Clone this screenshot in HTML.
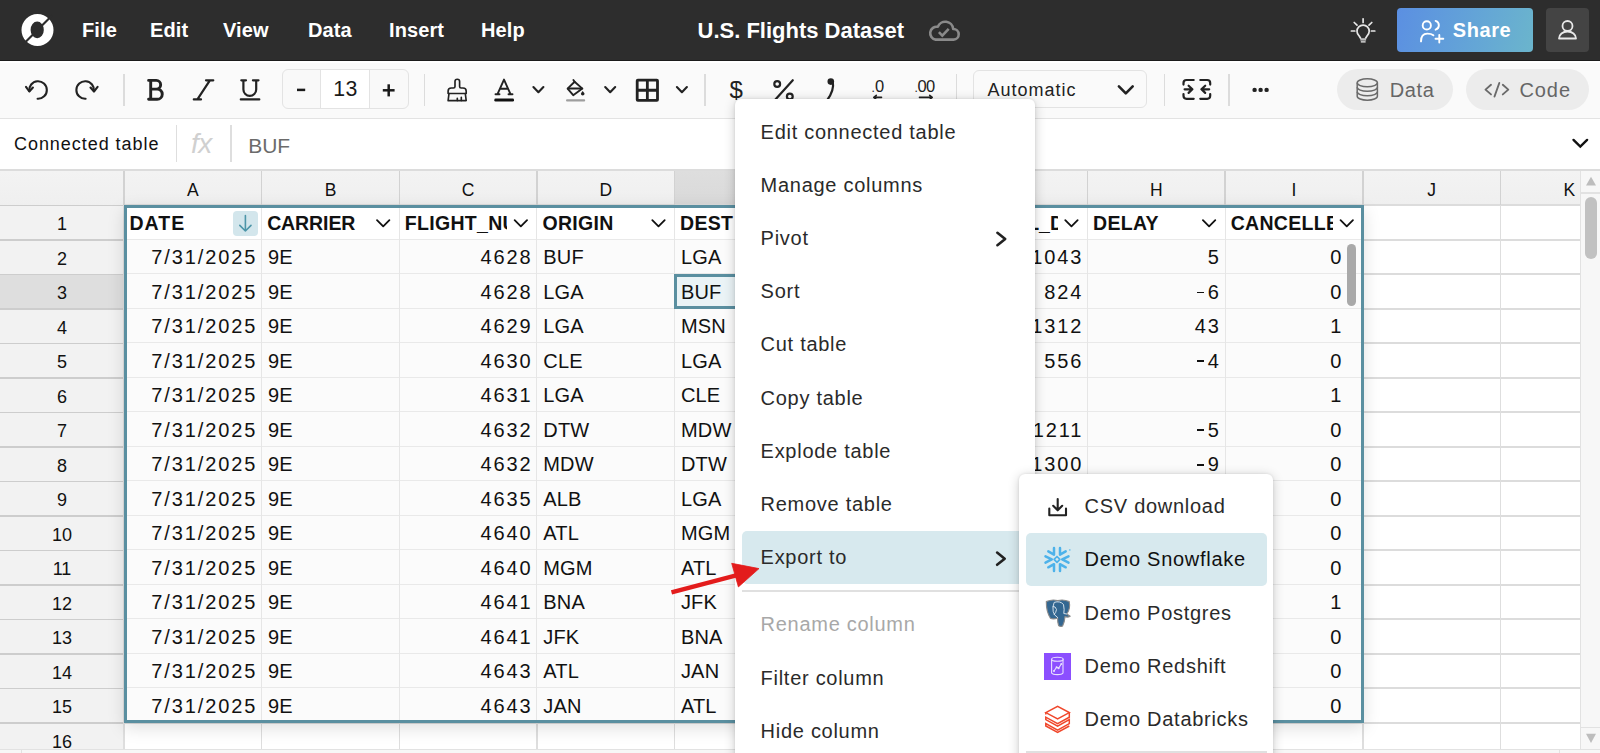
<!DOCTYPE html>
<html><head><meta charset="utf-8"><style>
html,body{margin:0;padding:0;width:1600px;height:753px;overflow:hidden;background:#fff;font-family:"Liberation Sans", sans-serif;}
.t{position:absolute;white-space:nowrap;}
.r{position:absolute;box-sizing:border-box;}
svg{position:absolute;overflow:visible;}
</style></head><body>
<div class="r" style="left:0px;top:0px;width:1600px;height:61px;background:#2d2d2d;"></div>
<div class="r" style="left:0px;top:60px;width:1600px;height:1px;background:#1b1b1b;"></div>
<svg style="left:0;top:0" width="80" height="61" viewBox="0 0 80 61">
<path fill="#fff" fill-rule="evenodd" d="M37.5 14 A16 16 0 1 1 37.5 46 A16 16 0 1 1 37.5 14 Z M37.2 21.6 A6.6 8.3 0 1 0 37.2 38.2 A6.6 8.3 0 1 0 37.2 21.6 Z"/>
<line x1="23" y1="44.5" x2="52" y2="15.5" stroke="#2d2d2d" stroke-width="2.2"/>
</svg>
<div class="t" style="left:82px;top:20.37px;font-size:20px;line-height:20px;font-weight:700;color:#fff;letter-spacing:0.1px;">File</div>
<div class="t" style="left:150px;top:20.37px;font-size:20px;line-height:20px;font-weight:700;color:#fff;letter-spacing:0.1px;">Edit</div>
<div class="t" style="left:223px;top:20.37px;font-size:20px;line-height:20px;font-weight:700;color:#fff;letter-spacing:0.1px;">View</div>
<div class="t" style="left:308px;top:20.37px;font-size:20px;line-height:20px;font-weight:700;color:#fff;letter-spacing:0.1px;">Data</div>
<div class="t" style="left:389px;top:20.37px;font-size:20px;line-height:20px;font-weight:700;color:#fff;letter-spacing:0.1px;">Insert</div>
<div class="t" style="left:481px;top:20.37px;font-size:20px;line-height:20px;font-weight:700;color:#fff;letter-spacing:0.1px;">Help</div>
<div class="t" style="left:697.5px;top:19.58px;font-size:22px;line-height:22px;font-weight:700;color:#fff;letter-spacing:0px;">U.S. Flights Dataset</div>
<svg style="left:0;top:0" width="1600" height="61">
<path d="M935.6 39.6 H953.6 A5.3 5.3 0 0 0 953.2 29 A8 8 0 0 0 937.8 26.8 A6.45 6.45 0 0 0 935.6 39.6 Z" fill="none" stroke="#8a8a8a" stroke-width="2.6" stroke-linejoin="round"/>
<path d="M938.9 32.2 L942.3 35.6 L948.7 28.9" fill="none" stroke="#8a8a8a" stroke-width="2.6" stroke-linecap="butt" stroke-linejoin="miter"/>
</svg>
<svg style="left:0;top:0" width="1600" height="61">
<g fill="none" stroke="#e6e6e6" stroke-width="1.7" stroke-linecap="round">
<path d="M1360.6 38.2 L1358.9 35.6 A6.1 6.1 0 1 1 1367.3 35.6 L1365.6 38.2"/>
<line x1="1363.1" y1="18.8" x2="1363.1" y2="22.4"/>
<line x1="1351.4" y1="31" x2="1354.8" y2="31"/>
<line x1="1371.4" y1="31" x2="1374.8" y2="31"/>
<line x1="1354.2" y1="22.5" x2="1357" y2="25.2"/>
<line x1="1371.8" y1="22.5" x2="1369" y2="25.2"/>
</g>
<rect x="1360.3" y="38.2" width="5.8" height="2.4" fill="#bdbdbd"/>
<rect x="1360.8" y="40.9" width="4.8" height="1.8" fill="#bdbdbd"/>
</svg>
<div class="r" style="left:1397px;top:8px;width:136px;height:44px;border-radius:4px;background:linear-gradient(105deg,#5b8fe2 0%,#64a6d6 60%,#6bb5cc 100%);"></div>
<svg style="left:0;top:0" width="1600" height="61">
<g fill="none" stroke="#fff" stroke-width="1.9" stroke-linecap="round">
<circle cx="1426.8" cy="25.4" r="4.1"/>
<path d="M1435.6 20.9 A4.6 4.6 0 0 1 1435.6 29.7"/>
<path d="M1421 41.4 Q1421 33.6 1427.3 33.6 Q1431.3 33.6 1433.4 35.3"/>
<line x1="1439.3" y1="35" x2="1439.3" y2="42.6"/>
<line x1="1435.5" y1="38.8" x2="1443.3" y2="38.8"/>
</g></svg>
<div class="t" style="left:1452.8px;top:20.37px;font-size:20px;line-height:20px;font-weight:700;color:#fff;letter-spacing:0.55px;">Share</div>
<div class="r" style="left:1546px;top:8px;width:43px;height:44px;border-radius:4px;background:#444;"></div>
<svg style="left:0;top:0" width="1600" height="61">
<g fill="none" stroke="#e8e8e8" stroke-width="1.8">
<circle cx="1567.5" cy="26" r="5"/>
<path d="M1559 38.5 A8.5 7 0 0 1 1576 38.5 Z" stroke-linejoin="round"/>
</g></svg>
<div class="r" style="left:0px;top:61px;width:1600px;height:57px;background:#fafafa;"></div>
<div class="r" style="left:0px;top:61px;width:1600px;height:1.5px;background:#ffffff;"></div>
<div class="r" style="left:0px;top:118px;width:1600px;height:1px;background:#e3e3e3;"></div>
<div class="r" style="left:123.25px;top:74px;width:1.5px;height:31.5px;background:#dcdcdc;"></div>
<div class="r" style="left:423.95px;top:74px;width:1.5px;height:31.5px;background:#dcdcdc;"></div>
<div class="r" style="left:704.25px;top:74px;width:1.5px;height:31.5px;background:#dcdcdc;"></div>
<div class="r" style="left:955.85px;top:74px;width:1.5px;height:31.5px;background:#dcdcdc;"></div>
<div class="r" style="left:1163.65px;top:74px;width:1.5px;height:31.5px;background:#dcdcdc;"></div>
<div class="r" style="left:1228.05px;top:74px;width:1.5px;height:31.5px;background:#dcdcdc;"></div>
<svg style="left:0;top:0" width="1600" height="120">
<g fill="none" stroke="#222" stroke-width="2.1" stroke-linecap="round" stroke-linejoin="round">
<path d="M37.6 98.8 A8.8 8.8 0 1 0 29.3 91.2"/>
<path d="M26 86.9 L29.3 91.5 L32.9 87.5"/>
<path d="M85.6 98.8 A8.8 8.8 0 1 1 93.9 91.2"/>
<path d="M90.5 87.5 L94 91.5 L97.6 86.9"/>
</g>
<g fill="none" stroke="#222" stroke-width="2.9" stroke-linecap="round" stroke-linejoin="round">
<path d="M148.6 80.4 H156.3 A4.35 4.35 0 0 1 156.3 89.1 H150.7 M150.7 80.4 V99.2 M148.6 99.2 H157.2 A5.05 5.05 0 0 0 157.2 89.1"/>
</g>
<g fill="none" stroke="#222" stroke-width="2.2" stroke-linecap="round">
<path d="M206 80.3 H213.3 M209.9 80.3 L197.4 99.4 M193.8 99.4 H201"/>
<path d="M241.3 80.3 H246 M252.9 80.3 H258.5 M243.4 80.3 V89.4 A6.4 6.4 0 0 0 256.2 89.4 V80.3 M240.8 99.4 H259.3"/>
</g>
</svg>
<div class="r" style="left:282.3px;top:69.3px;width:126.4px;height:40px;border:1px solid #e3e3e3;border-radius:6px;background:#f9f9f9;"></div>
<div class="r" style="left:320px;top:70.3px;width:50.4px;height:38px;background:#fff;border-left:1.2px solid #e3e3e3;border-right:1.2px solid #e3e3e3;"></div>
<svg style="left:0;top:0" width="1600" height="120">
<g stroke="#1a1a1a" stroke-width="2.5" stroke-linecap="butt">
<line x1="297" y1="89.9" x2="305.2" y2="89.9"/>
<line x1="382.8" y1="90.3" x2="394.6" y2="90.3"/>
<line x1="388.7" y1="84.3" x2="388.7" y2="96.4"/>
</g></svg>
<div class="t" style="left:45.60000000000002px;width:600px;text-align:center;top:78.87px;font-size:21.3px;line-height:21.3px;font-weight:400;color:#1a1a1a;letter-spacing:0.6px;">13</div>
<svg style="left:0;top:0" width="1600" height="120">
<g fill="none" stroke="#222" stroke-width="1.65" stroke-linejoin="round" stroke-linecap="round">
<path d="M448.1 93.5 V91.2 A3.2 3.2 0 0 1 451.3 88 H453.5 A1.5 1.5 0 0 0 455 86.5 V81.5 A2.3 2.3 0 0 1 459.6 81.5 V86.5 A1.5 1.5 0 0 0 461.1 88 H463 A3.2 3.2 0 0 1 466.2 91.2 V93.5 Z"/>
<path d="M449 93.5 L448.1 100.6 H466.2 L465.3 93.5"/>
<path d="M457.3 100.6 V98.2 M461.3 100.6 V97.2"/>
</g>
<g fill="none" stroke="#222" stroke-width="1.9" stroke-linecap="round" stroke-linejoin="round">
<path d="M497.5 94.2 L504 79.6 L510.5 94.2 M500 88.8 H508 M495.5 94.2 H499.5 M508.5 94.2 H512.5"/>
</g>
<rect x="494.3" y="98.6" width="19.7" height="3" rx="1.3" fill="#111"/>
<g fill="none" stroke="#222" stroke-width="2.1" stroke-linecap="round" stroke-linejoin="round">
<path d="M533.4 87 L538.4 92.2 L543.4 87"/>
<path d="M605.2 87 L610.2 92.2 L615.2 87"/>
<path d="M676.9 87 L681.9 92.2 L686.9 87"/>
</g>
<g fill="none" stroke="#222" stroke-width="1.9" stroke-linejoin="round" stroke-linecap="round">
<path d="M567.6 88.6 L574.6 81.8 L582.4 88.6 L573.2 95.2 Z"/>
<path d="M568 88.5 H582"/>
<path d="M574.6 81.8 L573.4 80"/>
</g>
<path d="M582.7 90.9 Q584.5 92.9 584.5 93.7 A1.8 1.8 0 0 1 580.9 93.7 Q580.9 92.9 582.7 90.9 Z" fill="#222"/>
<rect x="566" y="99.3" width="19.2" height="2.3" rx="1.1" fill="#9e9e9e"/>
<g fill="none" stroke="#222" stroke-width="2.8" stroke-linejoin="round">
<rect x="637.2" y="80.2" width="20.3" height="20.1" rx="0.6"/>
<path d="M647.35 80.2 V100.3 M637.2 90.25 H657.5"/>
</g>
</svg>
<div class="t" style="left:436.29999999999995px;width:600px;text-align:center;top:78.18px;font-size:24px;line-height:24px;font-weight:400;color:#222;letter-spacing:0px;">$</div>
<svg style="left:0;top:0" width="1600" height="120">
<g fill="none" stroke="#222" stroke-width="2.2" stroke-linecap="round">
<circle cx="777.2" cy="84" r="2.9"/>
<circle cx="789.8" cy="96.5" r="2.9"/>
<line x1="792.8" y1="80.2" x2="774.5" y2="100.5"/>
</g>
<circle cx="830.8" cy="81.6" r="3.3" fill="#222"/>
<path d="M832.8 82 Q834.5 90 827 100.5" fill="none" stroke="#222" stroke-width="2.2" stroke-linecap="round"/>
<g fill="none" stroke="#222" stroke-width="1.6" stroke-linecap="round" stroke-linejoin="round">
<path d="M873.8 97.4 H881.5 M873.8 97.4 L876.3 95.3 M873.8 97.4 L876.3 99.5"/>
<path d="M919.5 97.4 H932.2 M932.2 97.4 L929.7 95.3 M932.2 97.4 L929.7 99.5"/>
</g>
</svg>
<div class="t" style="left:577.6px;width:600px;text-align:center;top:78.23px;font-size:16.5px;line-height:16.5px;font-weight:400;color:#222;letter-spacing:0px;letter-spacing:-0.5px;"><span style="font-size:12px;margin-right:0.5px">.</span>0</div>
<div class="t" style="left:624.4px;width:600px;text-align:center;top:78.23px;font-size:16.5px;line-height:16.5px;font-weight:400;color:#222;letter-spacing:0px;letter-spacing:-0.8px;"><span style="font-size:12px;margin-right:0.5px">.</span>00</div>
<div class="r" style="left:973.4px;top:70.3px;width:174.1px;height:37.8px;border:1px solid #e3e3e3;border-radius:6px;background:#fafafa;"></div>
<div class="t" style="left:987.5px;top:81.06px;font-size:18px;line-height:18px;font-weight:400;color:#222;letter-spacing:1.0px;">Automatic</div>
<svg style="left:0;top:0" width="1600" height="120">
<path d="M1118.9 86.4 L1125.8 93.4 L1132.7 86.4" fill="none" stroke="#222" stroke-width="2.6" stroke-linecap="round" stroke-linejoin="round"/>
<g fill="none" stroke="#222" stroke-width="2.2" stroke-linecap="round" stroke-linejoin="round">
<path d="M1183.5 84.6 V83 A3 3 0 0 1 1186.5 80 H1193.7 M1200.3 80 H1207.2 A3 3 0 0 1 1210.2 83 V84.6 M1210.2 94 V95.8 A3 3 0 0 1 1207.2 98.8 H1200.3 M1193.7 98.8 H1186.5 A3 3 0 0 1 1183.5 95.8 V94"/>
<path d="M1184.6 89.3 H1192.4 M1188.6 85.7 L1192.4 89.3 L1188.6 92.9"/>
<path d="M1209.2 89.3 H1201.4 M1205.2 85.7 L1201.4 89.3 L1205.2 92.9"/>
</g>
<circle cx="1254.6" cy="89.9" r="2.2" fill="#222"/>
<circle cx="1260.6" cy="89.9" r="2.2" fill="#222"/>
<circle cx="1266.6" cy="89.9" r="2.2" fill="#222"/>
</svg>
<div class="r" style="left:1337px;top:69px;width:116px;height:41px;border-radius:21px;background:#ececec;"></div>
<div class="r" style="left:1466px;top:69px;width:123px;height:41px;border-radius:21px;background:#ececec;"></div>
<svg style="left:0;top:0" width="1600" height="120">
<g fill="none" stroke="#6a6a6a" stroke-width="1.5">
<ellipse cx="1367.3" cy="82.8" rx="10.1" ry="4"/>
<path d="M1357.2 82.8 V96.2 A10.1 4 0 0 0 1377.4 96.2 V82.8"/>
<path d="M1357.2 87.3 A10.1 4 0 0 0 1377.4 87.3"/>
<path d="M1357.2 91.8 A10.1 4 0 0 0 1377.4 91.8"/>
</g>
<g fill="none" stroke="#6a6a6a" stroke-width="1.9" stroke-linecap="round" stroke-linejoin="round">
<path d="M1491 84.8 L1485.5 89.6 L1491 94.4"/>
<path d="M1502.8 84.8 L1508.3 89.6 L1502.8 94.4"/>
<path d="M1499.3 83 L1494.5 96.5"/>
</g>
</svg>
<div class="t" style="left:1389.8px;top:79.57px;font-size:20px;line-height:20px;font-weight:400;color:#666;letter-spacing:0.6px;">Data</div>
<div class="t" style="left:1519.5px;top:79.57px;font-size:20px;line-height:20px;font-weight:400;color:#666;letter-spacing:0.9px;">Code</div>
<div class="r" style="left:0px;top:119px;width:1600px;height:51px;background:#fff;"></div>
<div class="r" style="left:0px;top:169px;width:1600px;height:2px;background:#dcdcdc;"></div>
<div class="t" style="left:14px;top:135.36px;font-size:18px;line-height:18px;font-weight:400;color:#111;letter-spacing:0.95px;">Connected table</div>
<div class="r" style="left:175.5px;top:125.3px;width:1.5px;height:36.7px;background:#dedede;"></div>
<div class="r" style="left:230.3px;top:125.3px;width:1.5px;height:36.7px;background:#dedede;"></div>
<div class="t" style="left:191px;top:130.30px;font-size:28px;line-height:28px;font-weight:400;color:#d0d0d0;letter-spacing:-0.5px;font-style:italic;">fx</div>
<div class="t" style="left:248.3px;top:135.22px;font-size:21px;line-height:21px;font-weight:400;color:#6b6b6b;letter-spacing:-0.1px;">BUF</div>
<svg style="left:0;top:0" width="1600" height="175">
<path d="M1573.5 139.9 L1580.3 146.5 L1587.1 139.9" fill="none" stroke="#111" stroke-width="2.4" stroke-linecap="round" stroke-linejoin="miter"/>
</svg>
<div class="r" style="left:0px;top:171px;width:1600px;height:34.5px;background:linear-gradient(#f3f3f3,#efefef);"></div>
<div class="r" style="left:674.6px;top:171px;width:137.65px;height:34.5px;background:linear-gradient(#dedede,#d9d9d9);"></div>
<div class="r" style="left:0px;top:205px;width:124px;height:548px;background:#f2f2f2;"></div>
<div class="r" style="left:0px;top:274.9px;width:124px;height:34.5px;background:#dedede;"></div>
<div class="r" style="left:124px;top:205px;width:1456.5px;height:548px;background:#fff;"></div>
<div class="r" style="left:124px;top:204.4px;width:1456px;height:2px;background:#dcdcdc;"></div>
<div class="r" style="left:0px;top:204.6px;width:124px;height:1.6px;background:#cdcdcd;"></div>
<div class="r" style="left:124px;top:238.9px;width:1456px;height:2px;background:#dcdcdc;"></div>
<div class="r" style="left:0px;top:239.1px;width:124px;height:1.6px;background:#cdcdcd;"></div>
<div class="r" style="left:124px;top:273.4px;width:1456px;height:2px;background:#dcdcdc;"></div>
<div class="r" style="left:0px;top:273.59999999999997px;width:124px;height:1.6px;background:#cdcdcd;"></div>
<div class="r" style="left:124px;top:307.9px;width:1456px;height:2px;background:#dcdcdc;"></div>
<div class="r" style="left:0px;top:308.09999999999997px;width:124px;height:1.6px;background:#cdcdcd;"></div>
<div class="r" style="left:124px;top:342.4px;width:1456px;height:2px;background:#dcdcdc;"></div>
<div class="r" style="left:0px;top:342.59999999999997px;width:124px;height:1.6px;background:#cdcdcd;"></div>
<div class="r" style="left:124px;top:376.9px;width:1456px;height:2px;background:#dcdcdc;"></div>
<div class="r" style="left:0px;top:377.09999999999997px;width:124px;height:1.6px;background:#cdcdcd;"></div>
<div class="r" style="left:124px;top:411.4px;width:1456px;height:2px;background:#dcdcdc;"></div>
<div class="r" style="left:0px;top:411.59999999999997px;width:124px;height:1.6px;background:#cdcdcd;"></div>
<div class="r" style="left:124px;top:445.9px;width:1456px;height:2px;background:#dcdcdc;"></div>
<div class="r" style="left:0px;top:446.09999999999997px;width:124px;height:1.6px;background:#cdcdcd;"></div>
<div class="r" style="left:124px;top:480.4px;width:1456px;height:2px;background:#dcdcdc;"></div>
<div class="r" style="left:0px;top:480.59999999999997px;width:124px;height:1.6px;background:#cdcdcd;"></div>
<div class="r" style="left:124px;top:514.9px;width:1456px;height:2px;background:#dcdcdc;"></div>
<div class="r" style="left:0px;top:515.1px;width:124px;height:1.6px;background:#cdcdcd;"></div>
<div class="r" style="left:124px;top:549.4px;width:1456px;height:2px;background:#dcdcdc;"></div>
<div class="r" style="left:0px;top:549.6px;width:124px;height:1.6px;background:#cdcdcd;"></div>
<div class="r" style="left:124px;top:583.9px;width:1456px;height:2px;background:#dcdcdc;"></div>
<div class="r" style="left:0px;top:584.1px;width:124px;height:1.6px;background:#cdcdcd;"></div>
<div class="r" style="left:124px;top:618.4px;width:1456px;height:2px;background:#dcdcdc;"></div>
<div class="r" style="left:0px;top:618.6px;width:124px;height:1.6px;background:#cdcdcd;"></div>
<div class="r" style="left:124px;top:652.9px;width:1456px;height:2px;background:#dcdcdc;"></div>
<div class="r" style="left:0px;top:653.1px;width:124px;height:1.6px;background:#cdcdcd;"></div>
<div class="r" style="left:124px;top:687.4px;width:1456px;height:2px;background:#dcdcdc;"></div>
<div class="r" style="left:0px;top:687.6px;width:124px;height:1.6px;background:#cdcdcd;"></div>
<div class="r" style="left:124px;top:721.9px;width:1456px;height:2px;background:#dcdcdc;"></div>
<div class="r" style="left:0px;top:722.1px;width:124px;height:1.6px;background:#cdcdcd;"></div>
<div class="r" style="left:124px;top:756.4px;width:1456px;height:2px;background:#dcdcdc;"></div>
<div class="r" style="left:0px;top:756.6px;width:124px;height:1.6px;background:#cdcdcd;"></div>
<div class="r" style="left:123.25px;top:171px;width:1.5px;height:34px;background:#d2d2d2;"></div>
<div class="r" style="left:123.25px;top:205px;width:1.5px;height:548px;background:#dedede;"></div>
<div class="r" style="left:260.9px;top:171px;width:1.5px;height:34px;background:#d2d2d2;"></div>
<div class="r" style="left:260.9px;top:205px;width:1.5px;height:548px;background:#dedede;"></div>
<div class="r" style="left:398.55px;top:171px;width:1.5px;height:34px;background:#d2d2d2;"></div>
<div class="r" style="left:398.55px;top:205px;width:1.5px;height:548px;background:#dedede;"></div>
<div class="r" style="left:536.2px;top:171px;width:1.5px;height:34px;background:#d2d2d2;"></div>
<div class="r" style="left:536.2px;top:205px;width:1.5px;height:548px;background:#dedede;"></div>
<div class="r" style="left:673.85px;top:171px;width:1.5px;height:34px;background:#d2d2d2;"></div>
<div class="r" style="left:673.85px;top:205px;width:1.5px;height:548px;background:#dedede;"></div>
<div class="r" style="left:811.5px;top:171px;width:1.5px;height:34px;background:#d2d2d2;"></div>
<div class="r" style="left:811.5px;top:205px;width:1.5px;height:548px;background:#dedede;"></div>
<div class="r" style="left:949.1500000000001px;top:171px;width:1.5px;height:34px;background:#d2d2d2;"></div>
<div class="r" style="left:949.1500000000001px;top:205px;width:1.5px;height:548px;background:#dedede;"></div>
<div class="r" style="left:1086.8000000000002px;top:171px;width:1.5px;height:34px;background:#d2d2d2;"></div>
<div class="r" style="left:1086.8000000000002px;top:205px;width:1.5px;height:548px;background:#dedede;"></div>
<div class="r" style="left:1224.45px;top:171px;width:1.5px;height:34px;background:#d2d2d2;"></div>
<div class="r" style="left:1224.45px;top:205px;width:1.5px;height:548px;background:#dedede;"></div>
<div class="r" style="left:1362.1000000000001px;top:171px;width:1.5px;height:34px;background:#d2d2d2;"></div>
<div class="r" style="left:1362.1000000000001px;top:205px;width:1.5px;height:548px;background:#dedede;"></div>
<div class="r" style="left:1499.75px;top:171px;width:1.5px;height:34px;background:#d2d2d2;"></div>
<div class="r" style="left:1499.75px;top:205px;width:1.5px;height:548px;background:#dedede;"></div>
<div class="r" style="left:1637.4px;top:171px;width:1.5px;height:34px;background:#d2d2d2;"></div>
<div class="r" style="left:1637.4px;top:205px;width:1.5px;height:548px;background:#dedede;"></div>
<div class="t" style="left:-107.17500000000001px;width:600px;text-align:center;top:181.69px;font-size:17.5px;line-height:17.5px;font-weight:400;color:#111;letter-spacing:0px;">A</div>
<div class="t" style="left:30.474999999999966px;width:600px;text-align:center;top:181.69px;font-size:17.5px;line-height:17.5px;font-weight:400;color:#111;letter-spacing:0px;">B</div>
<div class="t" style="left:168.125px;width:600px;text-align:center;top:181.69px;font-size:17.5px;line-height:17.5px;font-weight:400;color:#111;letter-spacing:0px;">C</div>
<div class="t" style="left:305.7750000000001px;width:600px;text-align:center;top:181.69px;font-size:17.5px;line-height:17.5px;font-weight:400;color:#111;letter-spacing:0px;">D</div>
<div class="t" style="left:443.42500000000007px;width:600px;text-align:center;top:181.69px;font-size:17.5px;line-height:17.5px;font-weight:400;color:#111;letter-spacing:0px;">E</div>
<div class="t" style="left:581.075px;width:600px;text-align:center;top:181.69px;font-size:17.5px;line-height:17.5px;font-weight:400;color:#111;letter-spacing:0px;">F</div>
<div class="t" style="left:718.7250000000001px;width:600px;text-align:center;top:181.69px;font-size:17.5px;line-height:17.5px;font-weight:400;color:#111;letter-spacing:0px;">G</div>
<div class="t" style="left:856.3750000000002px;width:600px;text-align:center;top:181.69px;font-size:17.5px;line-height:17.5px;font-weight:400;color:#111;letter-spacing:0px;">H</div>
<div class="t" style="left:994.0250000000001px;width:600px;text-align:center;top:181.69px;font-size:17.5px;line-height:17.5px;font-weight:400;color:#111;letter-spacing:0px;">I</div>
<div class="t" style="left:1131.6750000000002px;width:600px;text-align:center;top:181.69px;font-size:17.5px;line-height:17.5px;font-weight:400;color:#111;letter-spacing:0px;">J</div>
<div class="t" style="left:1269.325px;width:600px;text-align:center;top:181.69px;font-size:17.5px;line-height:17.5px;font-weight:400;color:#111;letter-spacing:0px;">K</div>
<div class="t" style="left:-238px;width:600px;text-align:center;top:215.16px;font-size:18px;line-height:18px;font-weight:400;color:#111;letter-spacing:0px;">1</div>
<div class="t" style="left:-238px;width:600px;text-align:center;top:249.66px;font-size:18px;line-height:18px;font-weight:400;color:#111;letter-spacing:0px;">2</div>
<div class="t" style="left:-238px;width:600px;text-align:center;top:284.16px;font-size:18px;line-height:18px;font-weight:400;color:#111;letter-spacing:0px;">3</div>
<div class="t" style="left:-238px;width:600px;text-align:center;top:318.66px;font-size:18px;line-height:18px;font-weight:400;color:#111;letter-spacing:0px;">4</div>
<div class="t" style="left:-238px;width:600px;text-align:center;top:353.16px;font-size:18px;line-height:18px;font-weight:400;color:#111;letter-spacing:0px;">5</div>
<div class="t" style="left:-238px;width:600px;text-align:center;top:387.66px;font-size:18px;line-height:18px;font-weight:400;color:#111;letter-spacing:0px;">6</div>
<div class="t" style="left:-238px;width:600px;text-align:center;top:422.16px;font-size:18px;line-height:18px;font-weight:400;color:#111;letter-spacing:0px;">7</div>
<div class="t" style="left:-238px;width:600px;text-align:center;top:456.66px;font-size:18px;line-height:18px;font-weight:400;color:#111;letter-spacing:0px;">8</div>
<div class="t" style="left:-238px;width:600px;text-align:center;top:491.16px;font-size:18px;line-height:18px;font-weight:400;color:#111;letter-spacing:0px;">9</div>
<div class="t" style="left:-238px;width:600px;text-align:center;top:525.66px;font-size:18px;line-height:18px;font-weight:400;color:#111;letter-spacing:0px;">10</div>
<div class="t" style="left:-238px;width:600px;text-align:center;top:560.16px;font-size:18px;line-height:18px;font-weight:400;color:#111;letter-spacing:0px;">11</div>
<div class="t" style="left:-238px;width:600px;text-align:center;top:594.66px;font-size:18px;line-height:18px;font-weight:400;color:#111;letter-spacing:0px;">12</div>
<div class="t" style="left:-238px;width:600px;text-align:center;top:629.16px;font-size:18px;line-height:18px;font-weight:400;color:#111;letter-spacing:0px;">13</div>
<div class="t" style="left:-238px;width:600px;text-align:center;top:663.66px;font-size:18px;line-height:18px;font-weight:400;color:#111;letter-spacing:0px;">14</div>
<div class="t" style="left:-238px;width:600px;text-align:center;top:698.16px;font-size:18px;line-height:18px;font-weight:400;color:#111;letter-spacing:0px;">15</div>
<div class="t" style="left:-238px;width:600px;text-align:center;top:732.66px;font-size:18px;line-height:18px;font-weight:400;color:#111;letter-spacing:0px;">16</div>
<div class="r" style="left:124px;top:205px;width:1240px;height:517.5px;background:#fbfbfb;box-shadow:0 5px 16px rgba(0,0,0,0.13);"></div>
<div class="r" style="left:124px;top:205px;width:1240px;height:34.400000000000006px;background:#fff;"></div>
<div class="r" style="left:124px;top:238.9px;width:1240px;height:1px;background:#e9e9e9;"></div>
<div class="r" style="left:124px;top:273.4px;width:1240px;height:1px;background:#e9e9e9;"></div>
<div class="r" style="left:124px;top:307.9px;width:1240px;height:1px;background:#e9e9e9;"></div>
<div class="r" style="left:124px;top:342.4px;width:1240px;height:1px;background:#e9e9e9;"></div>
<div class="r" style="left:124px;top:376.9px;width:1240px;height:1px;background:#e9e9e9;"></div>
<div class="r" style="left:124px;top:411.4px;width:1240px;height:1px;background:#e9e9e9;"></div>
<div class="r" style="left:124px;top:445.9px;width:1240px;height:1px;background:#e9e9e9;"></div>
<div class="r" style="left:124px;top:480.4px;width:1240px;height:1px;background:#e9e9e9;"></div>
<div class="r" style="left:124px;top:514.9px;width:1240px;height:1px;background:#e9e9e9;"></div>
<div class="r" style="left:124px;top:549.4px;width:1240px;height:1px;background:#e9e9e9;"></div>
<div class="r" style="left:124px;top:583.9px;width:1240px;height:1px;background:#e9e9e9;"></div>
<div class="r" style="left:124px;top:618.4px;width:1240px;height:1px;background:#e9e9e9;"></div>
<div class="r" style="left:124px;top:652.9px;width:1240px;height:1px;background:#e9e9e9;"></div>
<div class="r" style="left:124px;top:687.4px;width:1240px;height:1px;background:#e9e9e9;"></div>
<div class="r" style="left:261.15px;top:205px;width:1px;height:517.5px;background:#e6e6e6;"></div>
<div class="r" style="left:398.8px;top:205px;width:1px;height:517.5px;background:#e6e6e6;"></div>
<div class="r" style="left:536.45px;top:205px;width:1px;height:517.5px;background:#e6e6e6;"></div>
<div class="r" style="left:674.1px;top:205px;width:1px;height:517.5px;background:#e6e6e6;"></div>
<div class="r" style="left:811.75px;top:205px;width:1px;height:517.5px;background:#e6e6e6;"></div>
<div class="r" style="left:949.4000000000001px;top:205px;width:1px;height:517.5px;background:#e6e6e6;"></div>
<div class="r" style="left:1087.0500000000002px;top:205px;width:1px;height:517.5px;background:#e6e6e6;"></div>
<div class="r" style="left:1224.7px;top:205px;width:1px;height:517.5px;background:#e6e6e6;"></div>
<div class="t" style="left:129.5px;top:213.69px;width:127.65px;overflow:hidden;font-size:19.5px;line-height:19.5px;font-weight:700;color:#111;letter-spacing:1.0px;">DATE</div>
<div class="t" style="left:267.15px;top:213.69px;width:102.65px;overflow:hidden;font-size:19.5px;line-height:19.5px;font-weight:700;color:#111;letter-spacing:-0.1px;">CARRIER</div>
<div class="t" style="left:404.8px;top:213.69px;width:102.65px;overflow:hidden;font-size:19.5px;line-height:19.5px;font-weight:700;color:#111;letter-spacing:0.3px;">FLIGHT_NUMBER</div>
<div class="t" style="left:542.45px;top:213.69px;width:102.65px;overflow:hidden;font-size:19.5px;line-height:19.5px;font-weight:700;color:#111;letter-spacing:0.3px;">ORIGIN</div>
<div class="t" style="left:680.1px;top:213.69px;width:102.65px;overflow:hidden;font-size:19.5px;line-height:19.5px;font-weight:700;color:#111;letter-spacing:0.3px;">DEST</div>
<div class="t" style="left:817.75px;top:213.69px;width:102.65px;overflow:hidden;font-size:19.5px;line-height:19.5px;font-weight:700;color:#111;letter-spacing:0.3px;">SCHED_DEP</div>
<div class="t" style="left:955.4000000000001px;top:213.69px;width:102.65px;height:22px;overflow:hidden;font-size:19.5px;line-height:19.5px;font-weight:700;color:#111;"><span style="position:absolute;right:-6px;top:0;">AL_D</span></div>
<div class="t" style="left:1093.0500000000002px;top:213.69px;width:102.65px;overflow:hidden;font-size:19.5px;line-height:19.5px;font-weight:700;color:#111;letter-spacing:0.3px;">DELAY</div>
<div class="t" style="left:1230.7px;top:213.69px;width:102.65px;overflow:hidden;font-size:19.5px;line-height:19.5px;font-weight:700;color:#111;letter-spacing:0.3px;">CANCELLED</div>
<svg style="left:0;top:0" width="1600" height="260"><g fill="none" stroke="#111" stroke-width="1.8" stroke-linecap="round" stroke-linejoin="round"><path d="M377.00 220.2 L383.20 226.4 L389.40 220.2"/><path d="M514.65 220.2 L520.85 226.4 L527.05 220.2"/><path d="M652.30 220.2 L658.50 226.4 L664.70 220.2"/><path d="M789.95 220.2 L796.15 226.4 L802.35 220.2"/><path d="M927.60 220.2 L933.80 226.4 L940.00 220.2"/><path d="M1065.25 220.2 L1071.45 226.4 L1077.65 220.2"/><path d="M1202.90 220.2 L1209.10 226.4 L1215.30 220.2"/><path d="M1340.55 220.2 L1346.75 226.4 L1352.95 220.2"/></g></svg>
<div class="r" style="left:233px;top:210.9px;width:24.8px;height:24.7px;background:#d3e6ec;border-radius:4px;"></div>
<svg style="left:0;top:0" width="1600" height="260"><g fill="none" stroke="#4d95a8" stroke-width="1.6" stroke-linecap="round" stroke-linejoin="round">
<path d="M245.4 215.5 V231 M239.8 225.4 L245.4 231 L251 225.4"/></g></svg>
<div class="r" style="left:674.3000000000001px;top:273.6px;width:138.25px;height:35.6px;background:#eaf3f6;border:3.2px solid #5a8fa0;"></div>
<div class="t" style="right:1344.55px;top:247.47px;font-size:20px;line-height:20px;font-weight:400;color:#111;letter-spacing:1.9px;padding-right:0;margin-right:-1.9px;">7/31/2025</div>
<div class="t" style="left:267.95px;top:247.47px;font-size:20px;line-height:20px;font-weight:400;color:#111;letter-spacing:0.2px;">9E</div>
<div class="t" style="right:1069.25px;top:247.47px;font-size:20px;line-height:20px;font-weight:400;color:#111;letter-spacing:1.9px;padding-right:0;margin-right:-1.9px;">4628</div>
<div class="t" style="left:543.25px;top:247.47px;font-size:20px;line-height:20px;font-weight:400;color:#111;letter-spacing:0.2px;">BUF</div>
<div class="t" style="left:680.9px;top:247.47px;font-size:20px;line-height:20px;font-weight:400;color:#111;letter-spacing:0.2px;">LGA</div>
<div class="t" style="right:518.6499999999999px;top:247.47px;font-size:20px;line-height:20px;font-weight:400;color:#111;letter-spacing:1.9px;padding-right:0;margin-right:-1.9px;">1043</div>
<div class="t" style="right:381.0px;top:247.47px;font-size:20px;line-height:20px;font-weight:400;color:#111;letter-spacing:1.9px;padding-right:0;margin-right:-1.9px;">5</div>
<div class="t" style="right:258.64999999999986px;top:247.47px;font-size:20px;line-height:20px;font-weight:400;color:#111;letter-spacing:1.9px;padding-right:0;margin-right:-1.9px;">0</div>
<div class="t" style="right:1344.55px;top:281.94px;font-size:20px;line-height:20px;font-weight:400;color:#111;letter-spacing:1.9px;padding-right:0;margin-right:-1.9px;">7/31/2025</div>
<div class="t" style="left:267.95px;top:281.94px;font-size:20px;line-height:20px;font-weight:400;color:#111;letter-spacing:0.2px;">9E</div>
<div class="t" style="right:1069.25px;top:281.94px;font-size:20px;line-height:20px;font-weight:400;color:#111;letter-spacing:1.9px;padding-right:0;margin-right:-1.9px;">4628</div>
<div class="t" style="left:543.25px;top:281.94px;font-size:20px;line-height:20px;font-weight:400;color:#111;letter-spacing:0.2px;">LGA</div>
<div class="t" style="left:680.9px;top:281.94px;font-size:20px;line-height:20px;font-weight:400;color:#111;letter-spacing:0.2px;">BUF</div>
<div class="t" style="right:518.6499999999999px;top:281.94px;font-size:20px;line-height:20px;font-weight:400;color:#111;letter-spacing:1.9px;padding-right:0;margin-right:-1.9px;">824</div>
<div class="t" style="right:381.0px;top:281.94px;font-size:20px;line-height:20px;font-weight:400;color:#111;letter-spacing:1.9px;padding-right:0;margin-right:-1.9px;"><span style="display:inline-block;width:6.8px;height:1.8px;background:#111;vertical-align:5.6px;margin-right:4.3px"></span>6</div>
<div class="t" style="right:258.64999999999986px;top:281.94px;font-size:20px;line-height:20px;font-weight:400;color:#111;letter-spacing:1.9px;padding-right:0;margin-right:-1.9px;">0</div>
<div class="t" style="right:1344.55px;top:316.41px;font-size:20px;line-height:20px;font-weight:400;color:#111;letter-spacing:1.9px;padding-right:0;margin-right:-1.9px;">7/31/2025</div>
<div class="t" style="left:267.95px;top:316.41px;font-size:20px;line-height:20px;font-weight:400;color:#111;letter-spacing:0.2px;">9E</div>
<div class="t" style="right:1069.25px;top:316.41px;font-size:20px;line-height:20px;font-weight:400;color:#111;letter-spacing:1.9px;padding-right:0;margin-right:-1.9px;">4629</div>
<div class="t" style="left:543.25px;top:316.41px;font-size:20px;line-height:20px;font-weight:400;color:#111;letter-spacing:0.2px;">LGA</div>
<div class="t" style="left:680.9px;top:316.41px;font-size:20px;line-height:20px;font-weight:400;color:#111;letter-spacing:0.2px;">MSN</div>
<div class="t" style="right:518.6499999999999px;top:316.41px;font-size:20px;line-height:20px;font-weight:400;color:#111;letter-spacing:1.9px;padding-right:0;margin-right:-1.9px;">1312</div>
<div class="t" style="right:381.0px;top:316.41px;font-size:20px;line-height:20px;font-weight:400;color:#111;letter-spacing:1.9px;padding-right:0;margin-right:-1.9px;">43</div>
<div class="t" style="right:258.64999999999986px;top:316.41px;font-size:20px;line-height:20px;font-weight:400;color:#111;letter-spacing:1.9px;padding-right:0;margin-right:-1.9px;">1</div>
<div class="t" style="right:1344.55px;top:350.88px;font-size:20px;line-height:20px;font-weight:400;color:#111;letter-spacing:1.9px;padding-right:0;margin-right:-1.9px;">7/31/2025</div>
<div class="t" style="left:267.95px;top:350.88px;font-size:20px;line-height:20px;font-weight:400;color:#111;letter-spacing:0.2px;">9E</div>
<div class="t" style="right:1069.25px;top:350.88px;font-size:20px;line-height:20px;font-weight:400;color:#111;letter-spacing:1.9px;padding-right:0;margin-right:-1.9px;">4630</div>
<div class="t" style="left:543.25px;top:350.88px;font-size:20px;line-height:20px;font-weight:400;color:#111;letter-spacing:0.2px;">CLE</div>
<div class="t" style="left:680.9px;top:350.88px;font-size:20px;line-height:20px;font-weight:400;color:#111;letter-spacing:0.2px;">LGA</div>
<div class="t" style="right:518.6499999999999px;top:350.88px;font-size:20px;line-height:20px;font-weight:400;color:#111;letter-spacing:1.9px;padding-right:0;margin-right:-1.9px;">556</div>
<div class="t" style="right:381.0px;top:350.88px;font-size:20px;line-height:20px;font-weight:400;color:#111;letter-spacing:1.9px;padding-right:0;margin-right:-1.9px;"><span style="display:inline-block;width:6.8px;height:1.8px;background:#111;vertical-align:5.6px;margin-right:4.3px"></span>4</div>
<div class="t" style="right:258.64999999999986px;top:350.88px;font-size:20px;line-height:20px;font-weight:400;color:#111;letter-spacing:1.9px;padding-right:0;margin-right:-1.9px;">0</div>
<div class="t" style="right:1344.55px;top:385.35px;font-size:20px;line-height:20px;font-weight:400;color:#111;letter-spacing:1.9px;padding-right:0;margin-right:-1.9px;">7/31/2025</div>
<div class="t" style="left:267.95px;top:385.35px;font-size:20px;line-height:20px;font-weight:400;color:#111;letter-spacing:0.2px;">9E</div>
<div class="t" style="right:1069.25px;top:385.35px;font-size:20px;line-height:20px;font-weight:400;color:#111;letter-spacing:1.9px;padding-right:0;margin-right:-1.9px;">4631</div>
<div class="t" style="left:543.25px;top:385.35px;font-size:20px;line-height:20px;font-weight:400;color:#111;letter-spacing:0.2px;">LGA</div>
<div class="t" style="left:680.9px;top:385.35px;font-size:20px;line-height:20px;font-weight:400;color:#111;letter-spacing:0.2px;">CLE</div>
<div class="t" style="right:258.64999999999986px;top:385.35px;font-size:20px;line-height:20px;font-weight:400;color:#111;letter-spacing:1.9px;padding-right:0;margin-right:-1.9px;">1</div>
<div class="t" style="right:1344.55px;top:419.82px;font-size:20px;line-height:20px;font-weight:400;color:#111;letter-spacing:1.9px;padding-right:0;margin-right:-1.9px;">7/31/2025</div>
<div class="t" style="left:267.95px;top:419.82px;font-size:20px;line-height:20px;font-weight:400;color:#111;letter-spacing:0.2px;">9E</div>
<div class="t" style="right:1069.25px;top:419.82px;font-size:20px;line-height:20px;font-weight:400;color:#111;letter-spacing:1.9px;padding-right:0;margin-right:-1.9px;">4632</div>
<div class="t" style="left:543.25px;top:419.82px;font-size:20px;line-height:20px;font-weight:400;color:#111;letter-spacing:0.2px;">DTW</div>
<div class="t" style="left:680.9px;top:419.82px;font-size:20px;line-height:20px;font-weight:400;color:#111;letter-spacing:0.2px;">MDW</div>
<div class="t" style="right:518.6499999999999px;top:419.82px;font-size:20px;line-height:20px;font-weight:400;color:#111;letter-spacing:1.9px;padding-right:0;margin-right:-1.9px;">1211</div>
<div class="t" style="right:381.0px;top:419.82px;font-size:20px;line-height:20px;font-weight:400;color:#111;letter-spacing:1.9px;padding-right:0;margin-right:-1.9px;"><span style="display:inline-block;width:6.8px;height:1.8px;background:#111;vertical-align:5.6px;margin-right:4.3px"></span>5</div>
<div class="t" style="right:258.64999999999986px;top:419.82px;font-size:20px;line-height:20px;font-weight:400;color:#111;letter-spacing:1.9px;padding-right:0;margin-right:-1.9px;">0</div>
<div class="t" style="right:1344.55px;top:454.29px;font-size:20px;line-height:20px;font-weight:400;color:#111;letter-spacing:1.9px;padding-right:0;margin-right:-1.9px;">7/31/2025</div>
<div class="t" style="left:267.95px;top:454.29px;font-size:20px;line-height:20px;font-weight:400;color:#111;letter-spacing:0.2px;">9E</div>
<div class="t" style="right:1069.25px;top:454.29px;font-size:20px;line-height:20px;font-weight:400;color:#111;letter-spacing:1.9px;padding-right:0;margin-right:-1.9px;">4632</div>
<div class="t" style="left:543.25px;top:454.29px;font-size:20px;line-height:20px;font-weight:400;color:#111;letter-spacing:0.2px;">MDW</div>
<div class="t" style="left:680.9px;top:454.29px;font-size:20px;line-height:20px;font-weight:400;color:#111;letter-spacing:0.2px;">DTW</div>
<div class="t" style="right:518.6499999999999px;top:454.29px;font-size:20px;line-height:20px;font-weight:400;color:#111;letter-spacing:1.9px;padding-right:0;margin-right:-1.9px;">1300</div>
<div class="t" style="right:381.0px;top:454.29px;font-size:20px;line-height:20px;font-weight:400;color:#111;letter-spacing:1.9px;padding-right:0;margin-right:-1.9px;"><span style="display:inline-block;width:6.8px;height:1.8px;background:#111;vertical-align:5.6px;margin-right:4.3px"></span>9</div>
<div class="t" style="right:258.64999999999986px;top:454.29px;font-size:20px;line-height:20px;font-weight:400;color:#111;letter-spacing:1.9px;padding-right:0;margin-right:-1.9px;">0</div>
<div class="t" style="right:1344.55px;top:488.76px;font-size:20px;line-height:20px;font-weight:400;color:#111;letter-spacing:1.9px;padding-right:0;margin-right:-1.9px;">7/31/2025</div>
<div class="t" style="left:267.95px;top:488.76px;font-size:20px;line-height:20px;font-weight:400;color:#111;letter-spacing:0.2px;">9E</div>
<div class="t" style="right:1069.25px;top:488.76px;font-size:20px;line-height:20px;font-weight:400;color:#111;letter-spacing:1.9px;padding-right:0;margin-right:-1.9px;">4635</div>
<div class="t" style="left:543.25px;top:488.76px;font-size:20px;line-height:20px;font-weight:400;color:#111;letter-spacing:0.2px;">ALB</div>
<div class="t" style="left:680.9px;top:488.76px;font-size:20px;line-height:20px;font-weight:400;color:#111;letter-spacing:0.2px;">LGA</div>
<div class="t" style="right:258.64999999999986px;top:488.76px;font-size:20px;line-height:20px;font-weight:400;color:#111;letter-spacing:1.9px;padding-right:0;margin-right:-1.9px;">0</div>
<div class="t" style="right:1344.55px;top:523.23px;font-size:20px;line-height:20px;font-weight:400;color:#111;letter-spacing:1.9px;padding-right:0;margin-right:-1.9px;">7/31/2025</div>
<div class="t" style="left:267.95px;top:523.23px;font-size:20px;line-height:20px;font-weight:400;color:#111;letter-spacing:0.2px;">9E</div>
<div class="t" style="right:1069.25px;top:523.23px;font-size:20px;line-height:20px;font-weight:400;color:#111;letter-spacing:1.9px;padding-right:0;margin-right:-1.9px;">4640</div>
<div class="t" style="left:543.25px;top:523.23px;font-size:20px;line-height:20px;font-weight:400;color:#111;letter-spacing:0.2px;">ATL</div>
<div class="t" style="left:680.9px;top:523.23px;font-size:20px;line-height:20px;font-weight:400;color:#111;letter-spacing:0.2px;">MGM</div>
<div class="t" style="right:258.64999999999986px;top:523.23px;font-size:20px;line-height:20px;font-weight:400;color:#111;letter-spacing:1.9px;padding-right:0;margin-right:-1.9px;">0</div>
<div class="t" style="right:1344.55px;top:557.70px;font-size:20px;line-height:20px;font-weight:400;color:#111;letter-spacing:1.9px;padding-right:0;margin-right:-1.9px;">7/31/2025</div>
<div class="t" style="left:267.95px;top:557.70px;font-size:20px;line-height:20px;font-weight:400;color:#111;letter-spacing:0.2px;">9E</div>
<div class="t" style="right:1069.25px;top:557.70px;font-size:20px;line-height:20px;font-weight:400;color:#111;letter-spacing:1.9px;padding-right:0;margin-right:-1.9px;">4640</div>
<div class="t" style="left:543.25px;top:557.70px;font-size:20px;line-height:20px;font-weight:400;color:#111;letter-spacing:0.2px;">MGM</div>
<div class="t" style="left:680.9px;top:557.70px;font-size:20px;line-height:20px;font-weight:400;color:#111;letter-spacing:0.2px;">ATL</div>
<div class="t" style="right:258.64999999999986px;top:557.70px;font-size:20px;line-height:20px;font-weight:400;color:#111;letter-spacing:1.9px;padding-right:0;margin-right:-1.9px;">0</div>
<div class="t" style="right:1344.55px;top:592.17px;font-size:20px;line-height:20px;font-weight:400;color:#111;letter-spacing:1.9px;padding-right:0;margin-right:-1.9px;">7/31/2025</div>
<div class="t" style="left:267.95px;top:592.17px;font-size:20px;line-height:20px;font-weight:400;color:#111;letter-spacing:0.2px;">9E</div>
<div class="t" style="right:1069.25px;top:592.17px;font-size:20px;line-height:20px;font-weight:400;color:#111;letter-spacing:1.9px;padding-right:0;margin-right:-1.9px;">4641</div>
<div class="t" style="left:543.25px;top:592.17px;font-size:20px;line-height:20px;font-weight:400;color:#111;letter-spacing:0.2px;">BNA</div>
<div class="t" style="left:680.9px;top:592.17px;font-size:20px;line-height:20px;font-weight:400;color:#111;letter-spacing:0.2px;">JFK</div>
<div class="t" style="right:258.64999999999986px;top:592.17px;font-size:20px;line-height:20px;font-weight:400;color:#111;letter-spacing:1.9px;padding-right:0;margin-right:-1.9px;">1</div>
<div class="t" style="right:1344.55px;top:626.64px;font-size:20px;line-height:20px;font-weight:400;color:#111;letter-spacing:1.9px;padding-right:0;margin-right:-1.9px;">7/31/2025</div>
<div class="t" style="left:267.95px;top:626.64px;font-size:20px;line-height:20px;font-weight:400;color:#111;letter-spacing:0.2px;">9E</div>
<div class="t" style="right:1069.25px;top:626.64px;font-size:20px;line-height:20px;font-weight:400;color:#111;letter-spacing:1.9px;padding-right:0;margin-right:-1.9px;">4641</div>
<div class="t" style="left:543.25px;top:626.64px;font-size:20px;line-height:20px;font-weight:400;color:#111;letter-spacing:0.2px;">JFK</div>
<div class="t" style="left:680.9px;top:626.64px;font-size:20px;line-height:20px;font-weight:400;color:#111;letter-spacing:0.2px;">BNA</div>
<div class="t" style="right:258.64999999999986px;top:626.64px;font-size:20px;line-height:20px;font-weight:400;color:#111;letter-spacing:1.9px;padding-right:0;margin-right:-1.9px;">0</div>
<div class="t" style="right:1344.55px;top:661.11px;font-size:20px;line-height:20px;font-weight:400;color:#111;letter-spacing:1.9px;padding-right:0;margin-right:-1.9px;">7/31/2025</div>
<div class="t" style="left:267.95px;top:661.11px;font-size:20px;line-height:20px;font-weight:400;color:#111;letter-spacing:0.2px;">9E</div>
<div class="t" style="right:1069.25px;top:661.11px;font-size:20px;line-height:20px;font-weight:400;color:#111;letter-spacing:1.9px;padding-right:0;margin-right:-1.9px;">4643</div>
<div class="t" style="left:543.25px;top:661.11px;font-size:20px;line-height:20px;font-weight:400;color:#111;letter-spacing:0.2px;">ATL</div>
<div class="t" style="left:680.9px;top:661.11px;font-size:20px;line-height:20px;font-weight:400;color:#111;letter-spacing:0.2px;">JAN</div>
<div class="t" style="right:258.64999999999986px;top:661.11px;font-size:20px;line-height:20px;font-weight:400;color:#111;letter-spacing:1.9px;padding-right:0;margin-right:-1.9px;">0</div>
<div class="t" style="right:1344.55px;top:695.58px;font-size:20px;line-height:20px;font-weight:400;color:#111;letter-spacing:1.9px;padding-right:0;margin-right:-1.9px;">7/31/2025</div>
<div class="t" style="left:267.95px;top:695.58px;font-size:20px;line-height:20px;font-weight:400;color:#111;letter-spacing:0.2px;">9E</div>
<div class="t" style="right:1069.25px;top:695.58px;font-size:20px;line-height:20px;font-weight:400;color:#111;letter-spacing:1.9px;padding-right:0;margin-right:-1.9px;">4643</div>
<div class="t" style="left:543.25px;top:695.58px;font-size:20px;line-height:20px;font-weight:400;color:#111;letter-spacing:0.2px;">JAN</div>
<div class="t" style="left:680.9px;top:695.58px;font-size:20px;line-height:20px;font-weight:400;color:#111;letter-spacing:0.2px;">ATL</div>
<div class="t" style="right:258.64999999999986px;top:695.58px;font-size:20px;line-height:20px;font-weight:400;color:#111;letter-spacing:1.9px;padding-right:0;margin-right:-1.9px;">0</div>
<div class="r" style="left:124px;top:205px;width:1240px;height:517.5px;border:3px solid #5a8fa0;"></div>
<div class="r" style="left:1347px;top:243.5px;width:9px;height:62.2px;background:#a9a9a9;border-radius:5px;"></div>
<div class="r" style="left:1580px;top:171px;width:20px;height:582px;background:#f7f7f7;border-left:1.5px solid #e2e2e2;"></div>
<div class="r" style="left:1580px;top:192px;width:20px;height:1.5px;background:#e2e2e2;"></div>
<div class="r" style="left:1580px;top:726.5px;width:20px;height:1.5px;background:#e2e2e2;"></div>
<div class="r" style="left:1584.6px;top:197px;width:12.4px;height:61.8px;background:#c1c1c1;border-radius:6.5px;"></div>
<svg style="left:0;top:0" width="1600" height="753">
<path d="M1586 185.5 L1591 176.8 L1596 185.5 Z" fill="#bdbdbd"/>
<path d="M1586 733.8 L1591 743 L1596 733.8 Z" fill="#bdbdbd"/>
</svg>
<div class="r" style="left:0px;top:748.5px;width:1600px;height:5px;background:#f7f7f7;border-top:1.5px solid #e2e2e2;"></div>
<div class="r" style="left:20.5px;top:748.5px;width:1.5px;height:5px;background:#e2e2e2;"></div>
<div class="r" style="left:1558.5px;top:748.5px;width:1.5px;height:5px;background:#e2e2e2;"></div>
<div class="r" style="left:734.7px;top:99.2px;width:300px;height:700px;background:#fff;border-radius:6px;box-shadow:0 2px 12px rgba(0,0,0,0.2),0 0 3px rgba(0,0,0,0.1);"></div>
<div class="r" style="left:742px;top:531.4px;width:290px;height:52.3px;background:#d7e9ee;border-radius:5px;"></div>
<div class="r" style="left:742px;top:590px;width:290px;height:2px;background:#e0e0e0;"></div>
<div class="t" style="left:760.6px;top:121.67px;font-size:20px;line-height:20px;font-weight:400;color:#2a2a2a;letter-spacing:0.72px;">Edit connected table</div>
<div class="t" style="left:760.6px;top:174.87px;font-size:20px;line-height:20px;font-weight:400;color:#2a2a2a;letter-spacing:0.72px;">Manage columns</div>
<div class="t" style="left:760.6px;top:228.07px;font-size:20px;line-height:20px;font-weight:400;color:#2a2a2a;letter-spacing:0.72px;">Pivot</div>
<div class="t" style="left:760.6px;top:281.27px;font-size:20px;line-height:20px;font-weight:400;color:#2a2a2a;letter-spacing:0.72px;">Sort</div>
<div class="t" style="left:760.6px;top:334.47px;font-size:20px;line-height:20px;font-weight:400;color:#2a2a2a;letter-spacing:0.72px;">Cut table</div>
<div class="t" style="left:760.6px;top:387.67px;font-size:20px;line-height:20px;font-weight:400;color:#2a2a2a;letter-spacing:0.72px;">Copy table</div>
<div class="t" style="left:760.6px;top:440.87px;font-size:20px;line-height:20px;font-weight:400;color:#2a2a2a;letter-spacing:0.72px;">Explode table</div>
<div class="t" style="left:760.6px;top:494.07px;font-size:20px;line-height:20px;font-weight:400;color:#2a2a2a;letter-spacing:0.72px;">Remove table</div>
<div class="t" style="left:760.6px;top:547.27px;font-size:20px;line-height:20px;font-weight:400;color:#2a2a2a;letter-spacing:0.72px;">Export to</div>
<div class="t" style="left:760.6px;top:614.37px;font-size:20px;line-height:20px;font-weight:400;color:#a8a8a8;letter-spacing:0.72px;">Rename column</div>
<div class="t" style="left:760.6px;top:667.72px;font-size:20px;line-height:20px;font-weight:400;color:#2a2a2a;letter-spacing:0.72px;">Filter column</div>
<div class="t" style="left:760.6px;top:721.07px;font-size:20px;line-height:20px;font-weight:400;color:#2a2a2a;letter-spacing:0.72px;">Hide column</div>
<svg style="left:0;top:0" width="1600" height="753"><g fill="none" stroke="#222" stroke-width="2.6" stroke-linecap="round" stroke-linejoin="round">
<path d="M997.4 232.8 L1005.2 239 L997.4 245.2"/>
<path d="M997.1 552.6 L1004.7 558.7 L997.1 564.8"/>
</g></svg>
<div class="r" style="left:1019px;top:473.8px;width:254px;height:400px;background:#fff;border-radius:6px;box-shadow:0 2px 12px rgba(0,0,0,0.2),0 0 3px rgba(0,0,0,0.1);"></div>
<div class="r" style="left:1026px;top:532.9px;width:241px;height:52.9px;background:#d7e9ee;border-radius:5px;"></div>
<div class="r" style="left:1026px;top:750.8px;width:241px;height:2px;background:#e0e0e0;"></div>
<div class="t" style="left:1084.6px;top:496.37px;font-size:20px;line-height:20px;font-weight:400;color:#2a2a2a;letter-spacing:0.72px;">CSV download</div>
<div class="t" style="left:1084.6px;top:549.47px;font-size:20px;line-height:20px;font-weight:400;color:#111;letter-spacing:0.72px;">Demo Snowflake</div>
<div class="t" style="left:1084.6px;top:602.57px;font-size:20px;line-height:20px;font-weight:400;color:#2a2a2a;letter-spacing:0.72px;">Demo Postgres</div>
<div class="t" style="left:1084.6px;top:655.67px;font-size:20px;line-height:20px;font-weight:400;color:#2a2a2a;letter-spacing:0.72px;">Demo Redshift</div>
<div class="t" style="left:1084.6px;top:708.77px;font-size:20px;line-height:20px;font-weight:400;color:#2a2a2a;letter-spacing:0.72px;">Demo Databricks</div>
<svg style="left:0;top:0" width="1600" height="753">
<g fill="none" stroke="#222" stroke-width="2.1" stroke-linecap="round" stroke-linejoin="round">
<path d="M1057.7 499 V510 M1053.2 505.8 L1057.7 510.3 L1062.2 505.8"/>
<path d="M1049.3 508.5 V515.2 H1066 V508.5"/>
</g>
<g fill="none" stroke="#4db2ea" stroke-width="2.5" stroke-linecap="round" stroke-linejoin="round">
<path d="M1048.3 551.4 L1054 554.6 V548"/>
<path d="M1065.7 551.4 L1060 554.6 V548"/>
<path d="M1045.5 556.3 L1051.8 559.4 L1045.5 562.6"/>
<path d="M1068.5 556.3 L1062.2 559.4 L1068.5 562.6"/>
<path d="M1048.3 567.3 L1054 564.2 V570.9"/>
<path d="M1065.7 567.3 L1060 564.2 V570.9"/>
</g>
<path d="M1057 556.5 L1059.9 559.4 L1057 562.3 L1054.1 559.4 Z" fill="none" stroke="#4db2ea" stroke-width="1.7" stroke-linejoin="round"/>
<circle cx="1069.8" cy="549.9" r="0.9" fill="#7cc6ee"/>
</svg>
<svg style="left:0;top:0" width="1600" height="753">
<path d="M1046.3 601.6 Q1052 599 1057.7 600.6 Q1063.5 599 1069.2 601.6 Q1070.8 608.5 1066.8 614 L1070.2 616.2 Q1067.6 617.8 1065 616.6 Q1064.6 622 1062.6 625.9 Q1060.2 627 1058.6 625.6 Q1057.4 621 1057.6 618.2 Q1053 619.6 1050.4 618.2 Q1046.2 612 1046.3 601.6 Z" fill="#336791" stroke="#8a8a8a" stroke-width="1.1" stroke-linejoin="round"/>
<g fill="none" stroke="#e4ecf3" stroke-width="0.9">
<path d="M1054.2 602.4 Q1052.2 607 1053.2 611.5 Q1054 615.5 1057.4 617.2 L1057.6 618.2"/>
<path d="M1054.2 602.4 Q1060 600.5 1063.5 604.5 Q1064.6 610 1063.8 613.5 L1066.8 614"/>
<path d="M1052.8 606.5 Q1055.5 606 1056.5 609.5 Q1056 613 1054 614.5"/>
</g>
</svg>
<div class="r" style="left:1044.3px;top:653px;width:26.9px;height:26.5px;background:#8c4fff;"></div>
<svg style="left:0;top:0" width="1600" height="753">
<g fill="none" stroke="#e9e0ff" stroke-width="1.1">
<ellipse cx="1057.4" cy="659.3" rx="5.8" ry="2"/>
<path d="M1051.6 659.3 V673 A5.8 2 0 0 0 1063 673 V659.3"/>
<path d="M1054 671 L1056.6 667.3 L1058.6 668.2 L1061.3 664"/>
</g>
<g fill="#e9e0ff"><circle cx="1054" cy="671" r="1"/><circle cx="1056.6" cy="667.3" r="1"/><circle cx="1058.6" cy="668.2" r="1"/><circle cx="1061.3" cy="664" r="1"/>
</g></svg>
<svg style="left:0;top:0" width="1600" height="753">
<g fill="none" stroke="#f0462a" stroke-width="1.5" stroke-linejoin="miter">
<path d="M1045.8 712.6 L1057.6 706.4 L1069.3 712.6 L1057.6 719 Z"/>
<path d="M1069.3 712.6 V717.2 L1057.6 723.6 L1045.8 717.2 V719.6 L1057.6 726.1 L1069.3 719.6 V723.6 L1057.6 730.1 L1045.8 723.6 V726 L1057.6 732.4 L1069.3 726"/>
<path d="M1045.8 712.6 V714.6"/>
</g></svg>
<svg style="left:0;top:0" width="1600" height="753">
<line x1="671.5" y1="592.3" x2="740" y2="574.3" stroke="#e31c1c" stroke-width="4.4"/>
<path d="M759 568.6 L731.7 563.3 L738.4 586.9 Z" fill="#e31c1c" stroke="#e31c1c" stroke-width="0.8" stroke-linejoin="round"/>
</svg>
</body></html>
